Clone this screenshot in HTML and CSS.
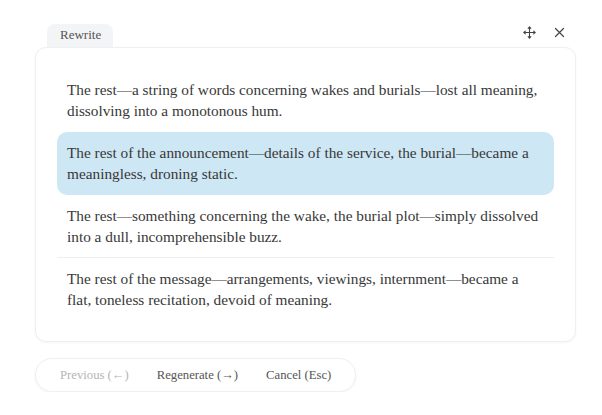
FILE: index.html
```html
<!DOCTYPE html>
<html lang="en">
<head>
<meta charset="utf-8">
<title>Rewrite</title>
<link rel="stylesheet" href="styles.css">
</head>
<body>
<div class="app">
  <div class="header">
    <div class="tab">Rewrite</div>
    <div class="tools">
      <span class="tool" aria-label="Move">
        <svg width="13" height="13" viewBox="0 0 13 13" fill="none" stroke="#444" stroke-width="1.1" stroke-linecap="round" stroke-linejoin="round">
          <path d="M6.5 1v11M1 6.5h11"/>
          <path d="M5.2 2.3L6.5 1l1.3 1.3M5.2 10.7l1.3 1.3 1.3-1.3M2.3 5.2L1 6.5l1.3 1.3M10.7 5.2L12 6.5l-1.3 1.3"/>
        </svg>
      </span>
      <span class="tool" aria-label="Close">
        <svg width="11" height="11" viewBox="0 0 11 11" fill="none" stroke="#444" stroke-width="1.2" stroke-linecap="round">
          <path d="M1.5 1.5l8 8M9.5 1.5l-8 8"/>
        </svg>
      </span>
    </div>
  </div>
  <div class="card">
    <div class="option">The rest—a string of words concerning wakes and burials—lost all meaning, dissolving into a monotonous hum.</div>
    <div class="option selected">The rest of the announcement—details of the service, the burial—became a meaningless, droning static.</div>
    <div class="option divided">The rest—something concerning the wake, the burial plot—simply dissolved into a dull, incomprehensible buzz.</div>
    <div class="option last">The rest of the message—arrangements, viewings, internment—became a flat, toneless recitation, devoid of meaning.</div>
  </div>
  <div class="actions">
    <span class="action disabled">Previous (←)</span>
    <span class="action">Regenerate (→)</span>
    <span class="action">Cancel (Esc)</span>
  </div>
</div>
</body>
</html>
```
FILE: styles.css
```css
html, body {
  margin: 0;
  padding: 0;
  background: #ffffff;
}

body {
  font-family: "Liberation Serif", "Times New Roman", serif;
  color: #333333;
}

.app {
  width: 541px;
  padding: 24px 0 0 35px;
}

.header {
  display: flex;
  justify-content: space-between;
  align-items: flex-start;
  padding: 0 10px 0 12px;
}

.tab {
  height: 23px;
  line-height: 22px;
  padding: 0 12px 0 13px;
  font-size: 13px;
  color: #555555;
  background: #f3f4f6;
  border-radius: 8px 8px 0 0;
}

.tools {
  display: flex;
  align-items: center;
  gap: 17px;
  padding-top: 2px;
}

.tool {
  display: flex;
  width: 13px;
  height: 13px;
  align-items: center;
  justify-content: center;
}

.card {
  border: 1px solid #efefef;
  border-radius: 11px;
  padding: 21px;
  background: #ffffff;
  box-shadow: 0 1px 3px rgba(0, 0, 0, 0.04);
}

.option {
  padding: 10px 12px 10px 10px;
  font-size: 15.3px;
  line-height: 21px;
  color: #383838;
  border-bottom: 1px solid transparent;
}

.option.selected {
  background: #cee7f5;
  border-radius: 10px;
}

.option.divided {
  border-bottom-color: #eeeeee;
}

.option.last {
  border-bottom: none;
}

.actions {
  display: inline-flex;
  align-items: center;
  gap: 28px;
  margin-top: 16px;
  height: 32px;
  padding: 0 24px 0 24px;
  border: 1px solid #f0f0f0;
  border-radius: 17px;
  background: #ffffff;
  box-shadow: 0 1px 3px rgba(0, 0, 0, 0.05);
  font-size: 12.7px;
  color: #555555;
}

.action.disabled {
  color: #b4b4b4;
}
```
